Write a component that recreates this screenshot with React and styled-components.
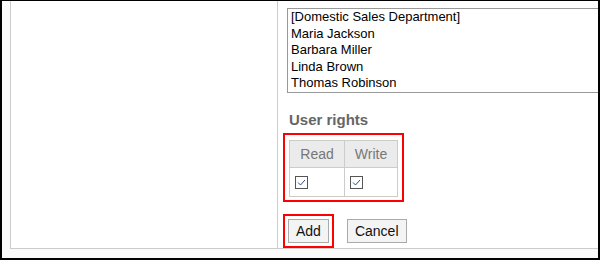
import React from 'react';
import styled, { createGlobalStyle } from 'styled-components';

const GlobalStyle = createGlobalStyle`
  body {
    margin: 0;
    background: #ffffff;
    font-family: 'Liberation Sans', Arial, sans-serif;
  }
`;

const Frame = styled.div`
  width: 600px;
  height: 260px;
  box-sizing: border-box;
  border-style: solid;
  border-color: #000;
  border-width: 1px 2px 2px 2px;
  padding-left: 8px;
  background: #fafafa;
  overflow: hidden;
`;

const FormTable = styled.div`
  display: grid;
  grid-template-columns: 267px 1fr;
  height: 248px;
  box-sizing: border-box;
  background: #fff;
  border-left: 1px solid #ccc;
  border-bottom: 1px solid #ccc;
`;

const LabelCell = styled.div`
  border-right: 1px solid #ccc;
`;

const ValueCell = styled.div`
  padding: 7px 0 0 9px;
  display: flex;
  flex-direction: column;
  align-items: flex-start;
`;

const MemberList = styled.div`
  width: 330px;
  height: 85px;
  box-sizing: border-box;
  border: 1px solid #999;
  padding: 0 3px;
  font-size: 13px;
  line-height: 16.6px;
  color: #000;
  white-space: nowrap;
`;

const SectionTitle = styled.h3`
  margin: 18px 0 4px 2px;
  font-size: 15px;
  line-height: 18px;
  font-weight: bold;
  color: #666;
`;

const Highlight = styled.div`
  border: 2px solid #ff0000;
  padding: ${p => p.$pad};
  margin-left: -4px;
`;

const RightsTable = styled.table`
  border-collapse: collapse;
  font-size: 14px;
`;

const HeadCell = styled.th`
  width: ${p => p.$w}px;
  height: 27px;
  padding: 0;
  box-sizing: border-box;
  background: #ebebeb;
  border: 1px solid #ccc;
  color: #777;
  font-weight: normal;
  text-align: center;
`;

const BodyCell = styled.td`
  height: 28px;
  padding: 0 0 0 5px;
  border: 1px solid #ccc;
  vertical-align: middle;
`;

const CheckBox = styled.span`
  display: block;
  width: 13px;
  height: 13px;
  box-sizing: border-box;
  border: 1px solid #555;
  background: #fff;
  margin-top: 1px;

  svg {
    display: block;
  }
`;

const ButtonRow = styled.div`
  display: flex;
  align-items: center;
  gap: 13px;
  margin-top: 12px;
`;

const Button = styled.button`
  height: 24px;
  box-sizing: border-box;
  padding: 0 7px;
  background: #f4f4f4;
  border: 1px solid #aaa;
  border-radius: 0;
  font-family: 'Liberation Sans', Arial, sans-serif;
  font-size: 14px;
  color: #111;
  display: block;
`;

const members = [
  '[Domestic Sales Department]',
  'Maria Jackson',
  'Barbara Miller',
  'Linda Brown',
  'Thomas Robinson',
];

const Check = () => (
  <CheckBox>
    <svg width="11" height="11" viewBox="0 0 11 11">
      <polyline points="2,5.5 4.5,8 9,3" fill="none" stroke="#2b4a8a" strokeWidth="1" />
    </svg>
  </CheckBox>
);

const App = () => {
  return (
    <Frame>
      <GlobalStyle />
      <FormTable>
        <LabelCell />
        <ValueCell>
          <MemberList>
            {members.map(name => (
              <div key={name}>{name}</div>
            ))}
          </MemberList>

          <SectionTitle>User rights</SectionTitle>

          <Highlight $pad="5px 4px 3px 4px">
            <RightsTable>
              <thead>
                <tr>
                  <HeadCell $w={55}>Read</HeadCell>
                  <HeadCell $w={53}>Write</HeadCell>
                </tr>
              </thead>
              <tbody>
                <tr>
                  <BodyCell><Check /></BodyCell>
                  <BodyCell><Check /></BodyCell>
                </tr>
              </tbody>
            </RightsTable>
          </Highlight>

          <ButtonRow>
            <Highlight $pad="3px">
              <Button>Add</Button>
            </Highlight>
            <Button>Cancel</Button>
          </ButtonRow>
        </ValueCell>
      </FormTable>
    </Frame>
  );
};

export default App;
